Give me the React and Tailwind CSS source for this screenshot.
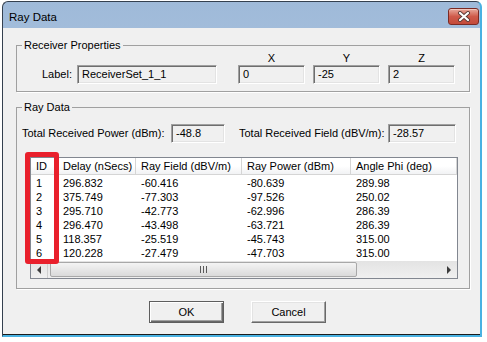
const rows = [
  ["1", "296.832", "-60.416", "-80.639", "289.98"],
  ["2", "375.749", "-77.303", "-97.526", "250.02"],
  ["3", "295.710", "-42.773", "-62.996", "286.39"],
  ["4", "296.470", "-43.498", "-63.721", "286.39"],
  ["5", "118.357", "-25.519", "-45.743", "315.00"],
  ["6", "120.228", "-27.479", "-47.703", "315.00"],
];

const cols = [
  { label: "ID", w: "w-[27px]" },
  { label: "Delay (nSecs)", w: "w-[78px]" },
  { label: "Ray Field (dBV/m)", w: "w-[106px]" },
  { label: "Ray Power (dBm)", w: "w-[109px]" },
  { label: "Angle Phi (deg)", w: "flex-1" },
];

function Field({ value, w }) {
  return (
    <div
      className={`${w} h-[19px] flex items-center pl-[4px] border border-t-[#a0a0a0] border-l-[#a0a0a0] border-r-white border-b-white shadow-[inset_1px_1px_0_#6e6e6e,inset_-1px_-1px_0_#e3e3e3] bg-[#f0f0f0]`}
    >
      {value}
    </div>
  );
}

function Group({ title, className, children }) {
  return (
    <fieldset
      className={`border border-[#a0a0a0] shadow-[1px_1px_0_#fff] ${className}`}
    >
      <legend className="ml-[5px] px-[2px] leading-[14px]">{title}</legend>
      {children}
    </fieldset>
  );
}

function Arrow({ dir }) {
  return (
    <svg width="5" height="8" viewBox="0 0 5 8">
      {dir === "left" ? (
        <polygon points="4,0 4,8 0,4" fill="#3c3c3c" />
      ) : (
        <polygon points="1,0 1,8 5,4" fill="#3c3c3c" />
      )}
    </svg>
  );
}

function RayList() {
  return (
    <div className="relative ml-[13px] mt-[14px] w-[428px] h-[122px] border border-[#828790] bg-white flex flex-col">
      <div className="h-[17px] flex border-b border-[#d5d5d5] bg-gradient-to-b from-white via-white to-[#f1f2f4]">
        {cols.map((c) => (
          <div
            key={c.label}
            className={`${c.w} pl-[5px] flex items-center border-r border-[#d5d5d5] whitespace-nowrap`}
          >
            {c.label}
          </div>
        ))}
      </div>
      <div className="flex-1 pt-[1px]">
        {rows.map((r) => (
          <div key={r[0]} className="flex h-[14px] leading-[14px]">
            {r.map((v, i) => (
              <div key={i} className={`${cols[i].w} pl-[5px] whitespace-nowrap`}>
                {v}
              </div>
            ))}
          </div>
        ))}
      </div>
      <div className="h-[17px] flex bg-gradient-to-b from-[#e3e3e3] to-[#f0f0f0]">
        <div className="w-[17px] flex items-center justify-center border-r border-[#cfcfcf]">
          <Arrow dir="left" />
        </div>
        <div className="ml-[2px] mt-[1px] w-[307px] h-[15px] rounded-[2px] border border-[#a8a8a8] bg-gradient-to-b from-[#f4f4f4] to-[#dadada] flex items-center justify-center">
          <svg width="7" height="7" viewBox="0 0 7 7">
            <rect x="0" y="0" width="1" height="7" fill="#5a5a5a" />
            <rect x="3" y="0" width="1" height="7" fill="#5a5a5a" />
            <rect x="6" y="0" width="1" height="7" fill="#5a5a5a" />
          </svg>
        </div>
        <div className="ml-auto w-[17px] flex items-center justify-center">
          <Arrow dir="right" />
        </div>
      </div>
      <div className="absolute left-[-6px] top-[-6px] w-[34px] h-[112px] border-[5px] border-[#e9202c] rounded-[3px]" />
    </div>
  );
}

export default function App() {
  return (
    <div className="w-[487px] h-[342px] bg-white pl-[2px] pt-[1px] text-[11px] text-black font-['Liberation_Sans',Arial,sans-serif]">
      <div className="w-[480px] h-[336px] flex flex-col rounded-t-[6px] border-l border-t border-[#34404f] border-r-2 border-b-2 border-r-[#49b2e2] border-b-[#49b2e2] bg-gradient-to-b from-[#9fbad9] to-[#c0d5eb]">
        <div className="h-[26px] flex">
          <div className="pl-[6px] pt-[8px] text-[11.5px] leading-[14px]">Ray Data</div>
          <div className="ml-auto mr-[1px] mt-[6px] w-[31px] h-[17px] rounded-[3px] border border-[#7b2a24] bg-gradient-to-b from-[#e6a89c] via-[#cf5a4a] to-[#c34a3a] flex items-center justify-center shadow-[inset_0_1px_0_#f2c7bd]">
            <svg width="14" height="11" viewBox="0 0 14 11">
              <path d="M3 2 L11 9 M11 2 L3 9" stroke="#5b3a36" strokeWidth="4" strokeLinecap="round" />
              <path d="M3 2 L11 9 M11 2 L3 9" stroke="#ffffff" strokeWidth="2.2" strokeLinecap="round" />
            </svg>
          </div>
        </div>
        <div className="flex-1 bg-[#f0f0f0] border-b border-[#1a1a1a] pt-[10px]">
          <Group title="Receiver Properties" className="ml-[13px] w-[454px]">
            <div className="flex items-end pl-[25px] pb-[7px]">
              <div className="w-[35px] h-[19px] flex items-center">Label:</div>
              <Field value="ReceiverSet_1_1" w="w-[140px]" />
              {["X", "Y", "Z"].map((k, i) => (
                <div
                  key={k}
                  className={`${i === 0 ? "ml-[21px]" : "ml-[8px]"} w-[67px] flex flex-col items-center`}
                >
                  <div className="h-[13px] leading-[13px]">{k}</div>
                  <Field value={["0", "-25", "2"][i]} w="w-[67px]" />
                </div>
              ))}
            </div>
          </Group>
          <Group title="Ray Data" className="ml-[13px] mt-[8px] w-[454px]">
            <div className="pt-[10px] pb-[9px]">
              <div className="flex items-center pl-[5px]">
                <div className="w-[149px] whitespace-nowrap">Total Received Power (dBm):</div>
                <Field value="-48.8" w="w-[54px]" />
                <div className="ml-[14px] w-[149px] whitespace-nowrap">Total Received Field (dBV/m):</div>
                <Field value="-28.57" w="w-[68px]" />
              </div>
              <RayList />
            </div>
          </Group>
          <div className="mt-[12px] pl-[146px] flex gap-[27px]">
            <button
              type="button"
              className="w-[75px] h-[22px] flex items-center justify-center bg-[#f0f0f0] border border-[#5e5e5e] shadow-[inset_1px_1px_0_#fff,inset_-1px_-1px_0_#696969,inset_-2px_-2px_0_#a0a0a0]"
            >
              OK
            </button>
            <button
              type="button"
              className="w-[75px] h-[22px] flex items-center justify-center bg-[#f0f0f0] border border-t-white border-l-white border-r-[#696969] border-b-[#696969] shadow-[inset_-1px_-1px_0_#a0a0a0,inset_1px_1px_0_#e3e3e3]"
            >
              Cancel
            </button>
          </div>
        </div>
      </div>
    </div>
  );
}
